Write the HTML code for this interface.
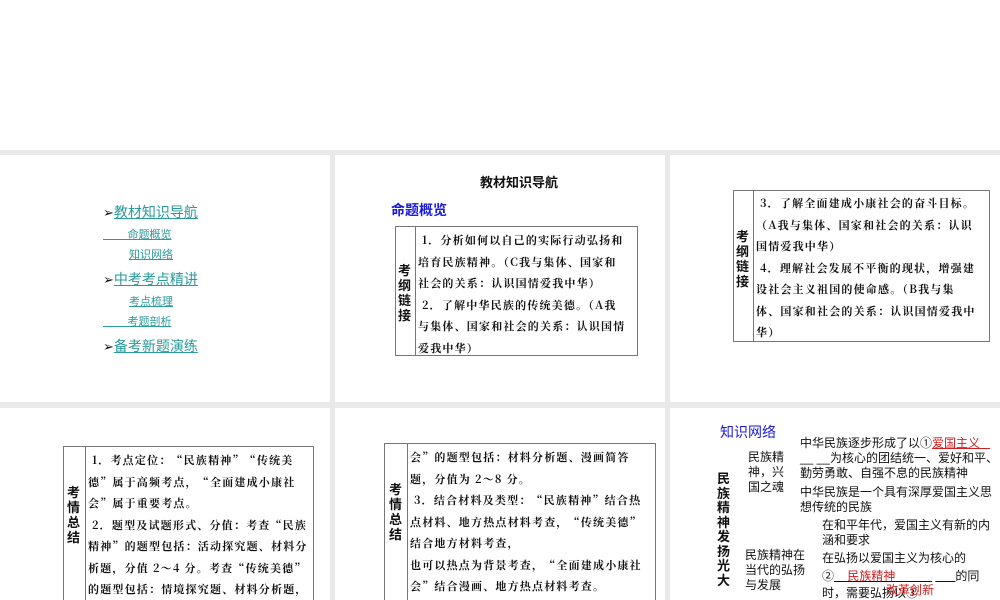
<!DOCTYPE html>
<html style="overflow:hidden"><head><meta charset="utf-8"><style>
*{margin:0;padding:0;box-sizing:border-box}
html,body{width:1000px;height:600px;overflow:hidden}
body{background:#fff;position:relative;font-family:"Liberation Serif","Noto Serif CJK SC","Noto Sans CJK SC",serif;color:#111}
.bg{position:absolute;left:0;top:150px;width:1000px;height:450px;background:#e9e9e9}
.p{position:absolute;background:#fff;overflow:hidden}
.a{position:absolute;white-space:nowrap}
.s{font-family:"Liberation Sans","Noto Sans CJK SC",sans-serif}
.lk{color:#2a9a9c;text-decoration:underline;font-family:"Liberation Sans","Noto Sans CJK SC",sans-serif}
.tb{position:absolute;border:1px solid #777;background:#fff}
.tb .c{position:absolute;top:0;bottom:0;border-right:1px solid #777}
.v{position:absolute;font-weight:bold;font-size:13px;line-height:15px;width:14px;font-family:"Liberation Sans","Noto Sans CJK SC",sans-serif}
.t{font-size:11px;letter-spacing:1.2px;line-height:21.5px;font-family:"Noto Serif CJK SC",serif;font-weight:bold}
.bl{color:#1a1adc;font-family:"Liberation Sans","Noto Sans CJK SC",sans-serif;font-size:14px;font-weight:bold}
.n{font-family:"Liberation Sans","Noto Sans CJK SC",sans-serif;font-size:12px;line-height:15px;color:#111}
.r{color:#d02020}
</style></head><body>
<div class="bg"></div>
<div class="p" style="left:0;top:155px;width:330px;height:247px">
<div class="a" style="left:103px;top:47px;font-size:14px"><span style="font-size:13px">➢</span><span class="lk">教材知识导航</span></div>
<div class="a lk" style="left:103px;top:71px;font-size:11px">&nbsp;&nbsp;&nbsp;&nbsp;&nbsp;&nbsp;&nbsp;&nbsp;命题概览</div>
<div class="a lk" style="left:129px;top:91px;font-size:11px">知识网络</div>
<div class="a" style="left:103px;top:114px;font-size:14px"><span style="font-size:13px">➢</span><span class="lk">中考考点精讲</span></div>
<div class="a lk" style="left:129px;top:138px;font-size:11px">考点梳理</div>
<div class="a lk" style="left:103px;top:158px;font-size:11px">&nbsp;&nbsp;&nbsp;&nbsp;&nbsp;&nbsp;&nbsp;&nbsp;考题剖析</div>
<div class="a" style="left:103px;top:181px;font-size:14px"><span style="font-size:13px">➢</span><span class="lk">备考新题演练</span></div>
</div>
<div class="p" style="left:335px;top:155px;width:330px;height:247px">
<div class="a s" style="left:145px;top:17px;font-size:13px;font-weight:bold">教材知识导航</div>
<div class="a bl" style="left:56px;top:45px">命题概览</div>
<div class="tb" style="left:60px;top:71px;width:243px;height:130px">
<div class="c" style="left:19px"></div>
<div class="v" style="left:2px;top:36px">考纲链接</div>
<div class="a t" style="left:22px;top:3px">&nbsp;1．分析如何以自己的实际行动弘扬和<br>培育民族精神。（C我与集体、国家和<br>社会的关系：认识国情爱我中华）<br>&nbsp;2．了解中华民族的传统美德。（A我<br>与集体、国家和社会的关系：认识国情<br>爱我中华）</div>
</div>
</div>
<div class="p" style="left:670px;top:155px;width:330px;height:247px">
<div class="tb" style="left:63px;top:35px;width:257px;height:152px">
<div class="c" style="left:19px"></div>
<div class="v" style="left:2px;top:38px">考纲链接</div>
<div class="a t" style="left:22px;top:2px">&nbsp;3．了解全面建成小康社会的奋斗目标。<br>（A我与集体、国家和社会的关系：认识<br>国情爱我中华）<br>&nbsp;4．理解社会发展不平衡的现状，增强建<br>设社会主义祖国的使命感。（B我与集<br>体、国家和社会的关系：认识国情爱我中<br>华）</div>
</div>
</div>
<div class="p" style="left:0;top:408px;width:330px;height:192px">
<div class="tb" style="left:63px;top:38px;width:251px;height:170px">
<div class="c" style="left:21px"></div>
<div class="v" style="left:3px;top:38px">考情总结</div>
<div class="a t" style="left:24px;top:3px">&nbsp;1．考点定位：“民族精神”“传统美<br>德”属于高频考点，“全面建成小康社<br>会”属于重要考点。<br>&nbsp;2．题型及试题形式、分值：考查“民族<br>精神”的题型包括：活动探究题、材料分<br>析题，分值 2～4 分。考查“传统美德”<br>的题型包括：情境探究题、材料分析题，</div>
</div>
</div>
<div class="p" style="left:335px;top:408px;width:330px;height:192px">
<div class="tb" style="left:49px;top:35px;width:272px;height:170px">
<div class="c" style="left:22px"></div>
<div class="v" style="left:4px;top:38px">考情总结</div>
<div class="a t" style="left:25px;top:3px">会”的题型包括：材料分析题、漫画简答<br>题，分值为 2～8 分。<br>&nbsp;3．结合材料及类型：“民族精神”结合热<br>点材料、地方热点材料考查，“传统美德”<br>结合地方材料考查，<br>也可以热点为背景考查，“全面建成小康社<br>会”结合漫画、地方热点材料考查。</div>
</div>
</div>
<div class="p" style="left:670px;top:408px;width:330px;height:192px">
<div class="a bl" style="left:50px;top:14px;font-weight:normal">知识网络</div>
<div class="a n" style="left:47px;top:64px;width:13px;white-space:normal;font-weight:bold;line-height:14.5px;font-size:13px">民族精神发扬光大</div>
<div class="a n" style="left:78px;top:42px">民族精<br>神，兴<br>国之魂</div>
<div class="a n" style="left:75px;top:140px">民族精神在<br>当代的弘扬<br>与发展</div>
<div class="a n" style="left:130px;top:28px">中华民族逐步形成了以①<span class="r" style="text-decoration:underline">爱国主义&nbsp;&nbsp;&nbsp;</span></div>
<div class="a n" style="left:130px;top:43px">__ __为核心的团结统一、爱好和平、</div>
<div class="a n" style="left:130px;top:58px">勤劳勇敢、自强不息的民族精神</div>
<div class="a n" style="left:130px;top:77px">中华民族是一个具有深厚爱国主义思</div>
<div class="a n" style="left:130px;top:92px">想传统的民族</div>
<div class="a n" style="left:152px;top:110px">在和平年代，爱国主义有新的内</div>
<div class="a n" style="left:152px;top:125px">涵和要求</div>
<div class="a n" style="left:152px;top:143px">在弘扬以爱国主义为核心的</div>
<div class="a n" style="left:152px;top:161px">②<span style="text-decoration:underline">&nbsp;&nbsp;&nbsp;&nbsp;<span class="r">民族精神</span>&nbsp;&nbsp;&nbsp;&nbsp;&nbsp;&nbsp;&nbsp;&nbsp;&nbsp;&nbsp;&nbsp;</span> <span style="text-decoration:underline">&nbsp;&nbsp;&nbsp;&nbsp;&nbsp;&nbsp;</span>的同</div>
<div class="a n" style="left:152px;top:178px">时，需要弘扬以③</div>
<div class="a n r" style="left:216px;top:175px">改革创新</div>
</div>
</body></html>
